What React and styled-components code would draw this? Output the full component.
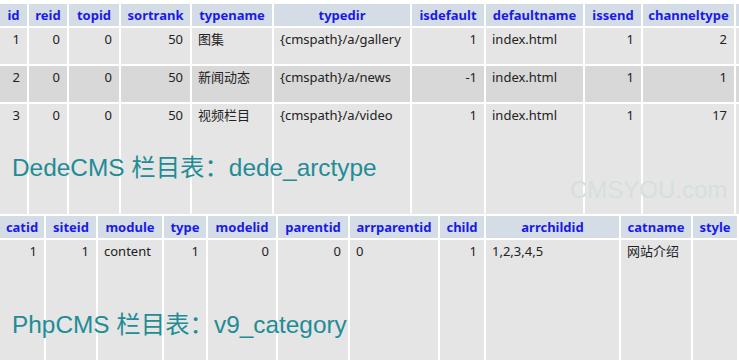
import React from "react";
import styled, { createGlobalStyle } from "styled-components";

const Global = createGlobalStyle`
  html, body { margin: 0; padding: 0; background: #ffffff; }
  body { width: 739px; height: 360px; overflow: hidden; font-family: "Noto Sans", "Noto Sans CJK SC", sans-serif; }
`;

const Page = styled.div`
  position: relative;
  width: 739px;
  height: 360px;
  overflow: hidden;
  padding-top: 4px;
  box-sizing: border-box;
  display: flex;
  flex-direction: column;
  gap: 2px;
`;

const Grid = styled.div`
  display: grid;
  grid-template-columns: ${(p) => p.$cols};
  grid-template-rows: ${(p) => p.$rows};
  gap: 2px;
  width: max-content;
`;

const Head = styled.div`
  background: #d4dce6;
  color: #1a1ae6;
  font-family: "Noto Sans", sans-serif;
  font-weight: 700;
  font-size: 13px;
  line-height: 22px;
  text-align: center;
  white-space: nowrap;
  overflow: hidden;
`;

const Cell = styled.div`
  background: ${(p) => (p.$alt ? "#d8d8d8" : "#e5e5e5")};
  color: #222;
  font-family: "Noto Sans", "Noto Sans CJK SC", sans-serif;
  font-size: 13px;
  line-height: 16px;
  padding: 3px 7px 0 6px;
  text-align: ${(p) => (p.$num ? "right" : "left")};
  white-space: nowrap;
  overflow: hidden;
`;

const Caption = styled.div`
  position: absolute;
  left: 12px;
  top: ${(p) => p.$top}px;
  font-family: "Liberation Sans", "Noto Sans CJK SC", sans-serif;
  font-size: 24.4px;
  line-height: 24px;
  color: #1f8c96;
  white-space: nowrap;
`;

const Watermark = styled.div`
  position: absolute;
  left: 570px;
  top: 178px;
  font-family: "Liberation Sans", sans-serif;
  font-size: 24px;
  line-height: 24px;
  color: #d6dfe0;
  white-space: nowrap;
`;

const dedeCols = [
  ["id", 27],
  ["reid", 38],
  ["topid", 50],
  ["sortrank", 69],
  ["typename", 80],
  ["typedir", 136],
  ["isdefault", 72],
  ["defaultname", 97],
  ["issend", 56],
  ["channeltype", 91],
  ["", 30],
];
const numA = [true, true, true, true, false, false, true, false, true, true, false];
const dedeRows = [
  ["1", "0", "0", "50", "图集", "{cmspath}/a/gallery", "1", "index.html", "1", "2", ""],
  ["2", "0", "0", "50", "新闻动态", "{cmspath}/a/news", "-1", "index.html", "1", "1", ""],
  ["3", "0", "0", "50", "视频栏目", "{cmspath}/a/video", "1", "index.html", "1", "17", ""],
];

const phpCols = [
  ["catid", 44],
  ["siteid", 50],
  ["module", 64],
  ["type", 42],
  ["modelid", 68],
  ["parentid", 70],
  ["arrparentid", 88],
  ["child", 44],
  ["arrchildid", 133],
  ["catname", 70],
  ["style", 44],
];
const numB = [true, true, false, true, true, true, false, true, false, false, false];
const phpRow = ["1", "1", "content", "1", "0", "0", "0", "1", "1,2,3,4,5", "网站介绍", ""];

export default function App() {
  return (
    <>
      <Global />
      <Page>
        <Grid
          $cols={dedeCols.map((c) => c[1] + "px").join(" ")}
          $rows="22px 36px 36px 110px"
        >
          {dedeCols.map((c, i) => (
            <Head key={"h" + i}>{c[0]}</Head>
          ))}
          {dedeRows.map((r, ri) =>
            r.map((v, ci) => (
              <Cell key={ri + "-" + ci} $num={numA[ci]} $alt={ri === 1}>
                {v}
              </Cell>
            ))
          )}
        </Grid>
        <Grid
          $cols={phpCols.map((c) => c[1] + "px").join(" ")}
          $rows="22px 140px"
        >
          {phpCols.map((c, i) => (
            <Head key={"p" + i}>{c[0]}</Head>
          ))}
          {phpRow.map((v, ci) => (
            <Cell key={"r" + ci} $num={numB[ci]}>
              {v}
            </Cell>
          ))}
        </Grid>
        <Caption $top={156}>DedeCMS 栏目表：dede_arctype</Caption>
        <Watermark>CMSYOU.com</Watermark>
        <Caption $top={313}>PhpCMS 栏目表：v9_category</Caption>
      </Page>
    </>
  );
}
